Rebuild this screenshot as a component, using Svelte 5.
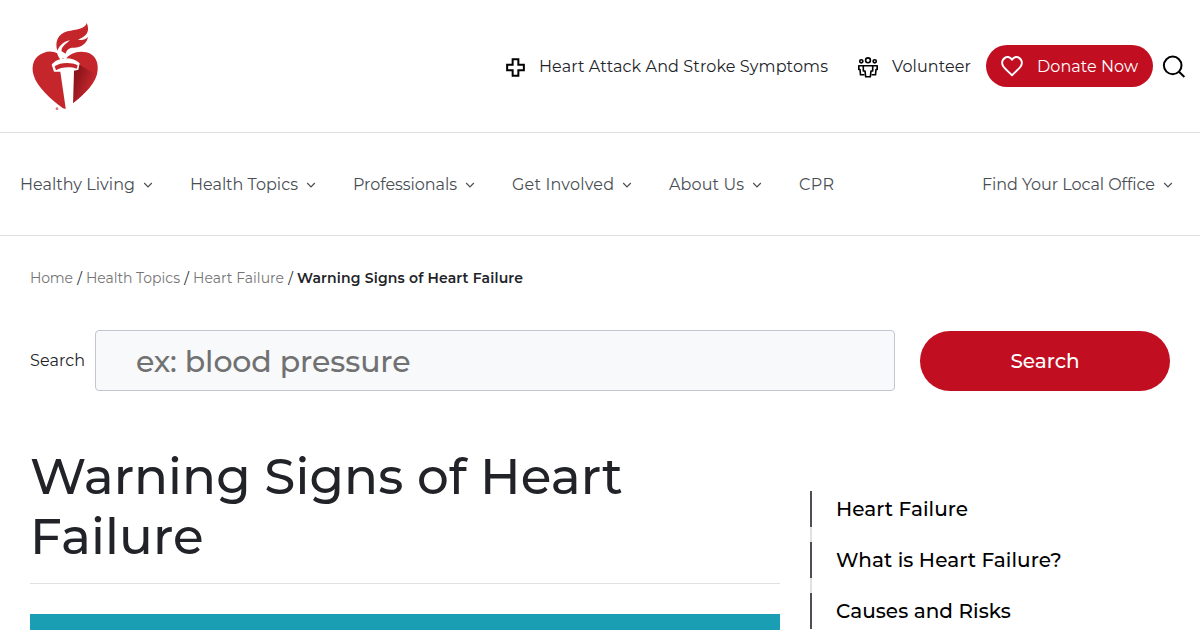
<script lang="ts">
	const nav = [
		{ label: 'Healthy Living', width: 115, menu: true },
		{ label: 'Health Topics', width: 108, menu: true },
		{ label: 'Professionals', width: 104, menu: true },
		{ label: 'Get Involved', width: 102, menu: true },
		{ label: 'About Us', width: 75, menu: true },
		{ label: 'CPR', width: 35, menu: false }
	];

	const crumbs = [
		{ label: 'Home', width: 43 },
		{ label: 'Health Topics', width: 94 },
		{ label: 'Heart Failure', width: 91 }
	];

	const topics = ['Heart Failure', 'What is Heart Failure?', 'Causes and Risks'];

	// spread the letters so that the text fills the given width
	function fit(node: HTMLElement, width: number) {
		const natural = node.getBoundingClientRect().width;
		const count = (node.textContent ?? '').trim().length;
		const space = (width - natural) / (count - 1);
		node.style.letterSpacing = `${space}px`;
		node.style.marginRight = `${-space}px`;
	}
</script>

{#snippet chevron()}
	<svg class="chevron" width="10" height="6" viewBox="0 0 10 6">
		<path d="M1.2 1 5 4.8 8.8 1" fill="none" stroke="currentColor" stroke-width="1.2" />
	</svg>
{/snippet}

<header class="top">
	<a class="logo" href="#home" aria-label="Home">
		<svg width="90" height="105" viewBox="0 0 270 315">
			<defs>
				<linearGradient id="shade" x1="0" y1="0" x2="1" y2="0.65">
					<stop offset="0" stop-color="#7c1218" />
					<stop offset="0.35" stop-color="#96181e" />
					<stop offset="0.8" stop-color="#c1272d" />
				</linearGradient>
			</defs>
			<path d="M135 134C119 112 93 105 72 113C42 123 32 151 41 181C51 216 91 252 128 279Q134 284 140 279C179 250 222 215 231 178C239 144 226 118 199 112C173 106 150 115 135 134Z" fill="#c4262c" />
			<path d="M174 147L229 179C218 216 180 248 158 265L160 166Z" fill="url(#shade)" />
			<path d="M95 149C112 126 156 122 179 145L175 164L162 167L159 271L146 280H137L121 170L102 170Z" fill="#fff" />
			<path d="M104 154C119 142 154 140 173 151L170 161C151 154 122 156 108 166Z" fill="#c4262c" />
			<path d="M122 134Q110 121 111 104Q108 82 142 80L128 97L146 118Z" fill="#fff" />
			<path d="M112 107C104 83 113 56 142 49C168 43 196 42 200 24C213 53 194 66 174 74C186 77 197 74 204 66C200 89 179 99 160 98C146 98 139 106 137 116L125 109C122 99 135 88 150 76C132 79 119 91 112 107Z" fill="#c4262c" />
			<circle cx="111" cy="281" r="3" fill="none" stroke="#c4262c" stroke-width="1.8" />
			<path d="M110 283v-4h2l-1 2 2 2" fill="none" stroke="#c4262c" />
		</svg>
	</a>

	<nav class="actions">
		<a class="action symptoms" href="#symptoms">
			<svg width="19" height="19" viewBox="0 0 20 20">
				<path d="M7 1.2H13V7H18.8V13H13V18.8H7V13H1.2V7H7Z" fill="none" stroke="#000" stroke-width="2.1" />
			</svg>
			<span use:fit={289}>Heart Attack And Stroke Symptoms</span>
		</a>
		<a class="action volunteer" href="#volunteer">
			<svg width="20" height="21" viewBox="0 0 20 21" fill="none" stroke="#000" stroke-width="1.6" stroke-linejoin="round">
				<circle cx="10" cy="3.3" r="2.4" />
				<circle cx="3.3" cy="4.3" r="1.6" />
				<circle cx="16.7" cy="4.3" r="1.6" />
				<path d="M5.3 8.7H14.7V14H13L12.3 19.8H7.7L7 14H5.3Z" />
				<path d="M5 8.7H.8V12.5H2L2.5 17.8H6.5M15 8.7H19.2V12.5H18L17.5 17.8H13.5" />
			</svg>
			<span use:fit={79}>Volunteer</span>
		</a>
		<a class="donate" href="#donate">
			<svg width="24" height="22" viewBox="0 0 24 22">
				<path d="M12 20.2C8.5 16.8 5.3 14.2 3.2 11.2C-.7 4.6 7.6-1.6 12 4.6C16.4-1.6 24.7 4.6 20.8 11.2C18.7 14.2 15.5 16.8 12 20.2Z" fill="none" stroke="#fff" stroke-width="2" stroke-linejoin="round" />
			</svg>
			<span use:fit={101}>Donate Now</span>
		</a>
		<button class="find" aria-label="Search">
			<svg width="24" height="24" viewBox="0 0 24 24" fill="none" stroke="#000" stroke-width="2">
				<circle cx="10.7" cy="10.4" r="8.8" />
				<path d="M17 16.7 22.4 22" />
			</svg>
		</button>
	</nav>
</header>

<nav class="main-nav">
	{#each nav as item}
		<a href="#nav">
			<span use:fit={item.width}>{item.label}</span>
			{#if item.menu}{@render chevron()}{/if}
		</a>
	{/each}
	<a class="office" href="#office">
		<span use:fit={173}>Find Your Local Office</span>
		{@render chevron()}
	</a>
</nav>

<div class="crumbs">
	{#each crumbs as crumb}
		<a href="#crumb"><span use:fit={crumb.width}>{crumb.label}</span></a>
		<span class="slash">/</span>
	{/each}
	<strong use:fit={226}>Warning Signs of Heart Failure</strong>
</div>

<form class="search">
	<label for="query"><span use:fit={55}>Search</span></label>
	<input id="query" type="text" placeholder="ex: blood pressure" />
	<button type="button">Search</button>
</form>

<main class="content">
	<article>
		<h1>Warning Signs of Heart Failure</h1>
		<div class="banner"></div>
	</article>
	<aside>
		<ul>
			{#each topics as topic}
				<li><a href="#topic">{topic}</a></li>
			{/each}
		</ul>
	</aside>
</main>

<style>
	:global(html) {
		overflow: hidden;
	}

	:global(body) {
		margin: 0;
		height: 630px;
		overflow: hidden;
		background: #fff;
		color: #222328;
		font-family: Montserrat, Inter, "Open Sans", sans-serif;
		font-size: 16px;
		font-weight: 400;
	}

	a {
		color: inherit;
		text-decoration: none;
		white-space: nowrap;
	}

	strong {
		white-space: nowrap;
	}

	svg {
		display: block;
		flex: none;
	}

	.top {
		box-sizing: border-box;
		height: 133px;
		padding: 15px 14px 0 20px;
		display: flex;
		justify-content: space-between;
		align-items: flex-start;
		border-bottom: 1px solid #e1e1e1;
	}

	.actions {
		display: flex;
		align-items: center;
		padding-top: 30px;
	}

	.action {
		display: flex;
		align-items: center;
		padding-top: 2px;
		line-height: 40px;
	}

	.symptoms {
		gap: 14px;
		margin-right: 30px;
	}

	.volunteer {
		gap: 14px;
		margin-right: 15px;
	}

	.donate {
		box-sizing: border-box;
		width: 167px;
		height: 42px;
		padding-left: 14px;
		display: flex;
		align-items: center;
		gap: 13px;
		border-radius: 21px;
		background: #c10e21;
		color: #fff;
	}

	.find {
		margin: 2px 0 0 9px;
		padding: 0;
		border: 0;
		background: none;
	}

	.main-nav {
		box-sizing: border-box;
		height: 103px;
		padding: 0 27px 0 20px;
		display: flex;
		align-items: center;
		gap: 37px;
		border-bottom: 1px solid #e1e1e1;
		color: #494e54;
	}

	.main-nav a {
		display: flex;
		align-items: center;
		gap: 8px;
	}

	.main-nav .office {
		margin-left: auto;
	}

	.chevron {
		margin-top: 1px;
	}

	.crumbs {
		height: 20px;
		padding: 32px 30px 0;
		display: flex;
		line-height: 20px;
		font-size: 14px;
	}

	.crumbs a {
		color: #757575;
	}

	.slash {
		width: 13px;
		text-align: center;
	}

	.crumbs strong {
		font-weight: 600;
	}

	.search {
		padding: 42px 30px 0;
		display: flex;
		align-items: center;
	}

	.search label {
		width: 65px;
	}

	.search input {
		box-sizing: border-box;
		width: 800px;
		height: 61px;
		padding: 3px 40px 1px;
		border: 1px solid #c1c7d0;
		border-radius: 4px;
		background: #f8f9fb;
		font-family: inherit;
		font-size: 30px;
		font-weight: 500;
		letter-spacing: -0.08px;
	}

	.search input::placeholder {
		color: #717171;
		opacity: 1;
	}

	.search button {
		width: 250px;
		height: 60px;
		margin: 1px 0 0 25px;
		padding: 0;
		border: 0;
		border-radius: 30px;
		background: #c10e21;
		color: #fff;
		font-family: inherit;
		font-size: 20px;
		font-weight: 500;
	}

	.content {
		padding: 56px 30px 0;
		display: flex;
		gap: 30px;
	}

	article {
		width: 750px;
	}

	h1 {
		margin: 0;
		padding-bottom: 16px;
		border-bottom: 1px solid #e1e1e1;
		font-size: 50px;
		line-height: 60px;
		font-weight: 500;
		letter-spacing: 0.09px;
	}

	.banner {
		height: 16px;
		margin-top: 30px;
		background: #1a9eb3;
	}

	aside {
		padding-top: 44px;
	}

	ul {
		margin: 0;
		padding: 0;
		list-style: none;
		display: flex;
		flex-direction: column;
		gap: 15px;
		background: linear-gradient(#e1e1e1, #e1e1e1) left / 2px 100% no-repeat;
	}

	li {
		padding-left: 24px;
		border-left: 2px solid #4b4e55;
		line-height: 36px;
		font-size: 20px;
		font-weight: 500;
		letter-spacing: 0.05px;
		color: #000;
	}
</style>
